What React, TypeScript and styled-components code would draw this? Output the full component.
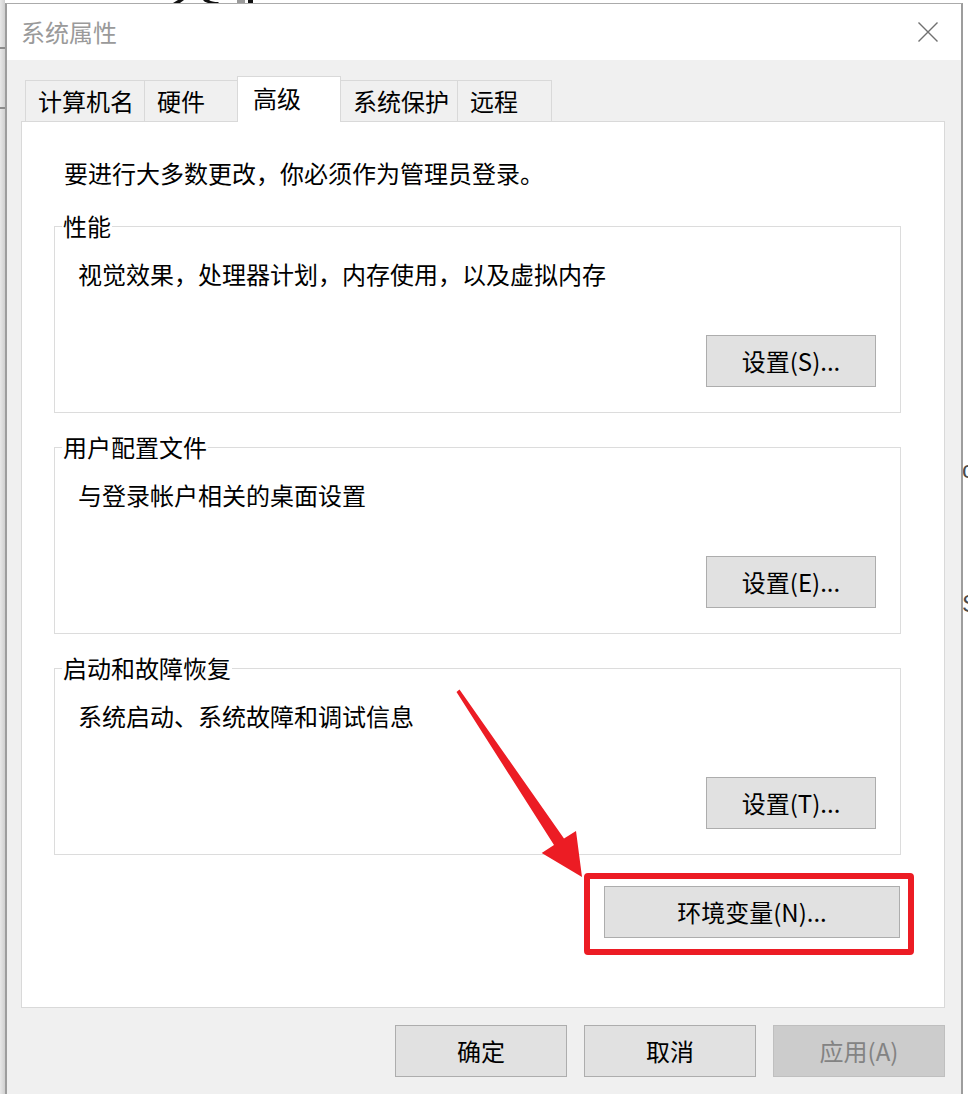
import React from "react";
import styled, { createGlobalStyle } from "styled-components";

const FONT = `"Noto Sans CJK SC", "Noto Sans CJK JP", "Noto Sans", sans-serif`;

const GlobalStyle = createGlobalStyle`
  html, body { margin: 0; padding: 0; background: #ffffff; }
  body { font-family: ${FONT}; }
  * { box-sizing: border-box; }
`;

const Page = styled.div`
  display: flex;
  width: 968px;
  height: 1094px;
  overflow: hidden;
  background: #ffffff;
  font-family: ${FONT};
  color: #000;
`;

const LeftEdge = styled.div`
  width: 5px;
  flex: none;
  display: flex;
  flex-direction: column;
  background: linear-gradient(to right, #e8e8e8, #d0d0d0);
`;

const EdgeMark = styled.div<{ $top: number }>`
  margin-top: ${(p) => p.$top}px;
  height: 2px;
  background: #8c8c8c;
`;

const RightEdge = styled.div`
  width: 5px;
  flex: none;
  display: flex;
  flex-direction: column;
  overflow: hidden;
  background: #ffffff;
`;

const EdgeGlyph = styled.div<{ $top: number }>`
  margin-top: ${(p) => p.$top}px;
  margin-left: -1px;
  font-family: "Liberation Sans", sans-serif;
  font-size: 24px;
  line-height: 24px;
  color: #4a4a4a;
  white-space: nowrap;
`;

const Center = styled.div`
  width: 958px;
  flex: none;
  display: flex;
  flex-direction: column;
`;

const TopStrip = styled.div`
  height: 3px;
  flex: none;
  overflow: hidden;
  display: flex;
`;

const Window = styled.div`
  flex: 1;
  display: flex;
  flex-direction: column;
  border-top: 1px solid #ababab;
  border-left: 2px solid #9d9d9d;
  border-right: 2px solid #9d9d9d;
`;

const TitleBar = styled.div`
  height: 56px;
  flex: none;
  background: #ffffff;
  display: flex;
  align-items: center;
  justify-content: space-between;
  padding: 0 23px 0 14px;
`;

const Title = styled.div`
  font-size: 24px;
  line-height: 32px;
  color: #9a9a9a;
`;

const CloseButton = styled.div`
  width: 20px;
  height: 20px;
  display: flex;
`;

const Body = styled.div`
  flex: 1;
  background: #f0f0f0;
  padding: 16px 16px 0 14px;
  display: flex;
  flex-direction: column;
`;

const TabRow = styled.div`
  height: 45px;
  display: flex;
  align-items: flex-end;
  padding-left: 4px;
`;

const Tab = styled.div<{ $w: number; $active?: boolean }>`
  width: ${(p) => p.$w}px;
  height: ${(p) => (p.$active ? 46 : 41)}px;
  margin-right: -1px;
  margin-bottom: ${(p) => (p.$active ? -1 : 0)}px;
  border: 1px solid #d9d9d9;
  border-bottom: none;
  background: ${(p) => (p.$active ? "#ffffff" : "#f0f0f0")};
  font-size: 24px;
  line-height: ${(p) => (p.$active ? 42 : 40)}px;
  padding-left: ${(p) => (p.$active ? 15 : 12)}px;
  white-space: nowrap;
  position: relative;
  z-index: ${(p) => (p.$active ? 1 : 0)};
`;

const Panel = styled.div`
  height: 887px;
  background: #ffffff;
  border: 1px solid #d9d9d9;
  padding: 35px 43px 0 32px;
  display: flex;
  flex-direction: column;
`;

const Intro = styled.div`
  font-size: 24px;
  line-height: 32px;
  margin-left: 10px;
`;

const Group = styled.fieldset<{ $gap: number }>`
  margin: ${(p) => p.$gap}px 0 0 0;
  padding: 0;
  border: 1px solid #dcdcdc;
  min-width: 0;
`;

const Legend = styled.legend`
  margin-left: 7px;
  padding: 0 1px;
  font-size: 24px;
  line-height: 32px;
`;

const GroupInner = styled.div`
  padding: 16px 24px 25px 23px;
  display: flex;
  flex-direction: column;
`;

const GroupDesc = styled.div`
  font-size: 24px;
  line-height: 32px;
`;

const ButtonRow = styled.div<{ $top: number; $right?: number }>`
  display: flex;
  justify-content: flex-end;
  margin-top: ${(p) => p.$top}px;
  margin-right: ${(p) => p.$right ?? 0}px;
`;

const Button = styled.button<{ $w: number }>`
  width: ${(p) => p.$w}px;
  height: 52px;
  flex: none;
  padding: 0;
  margin: 0;
  background: #e1e1e1;
  border: 1px solid #adadad;
  border-radius: 0;
  font-family: ${FONT};
  font-size: 24px;
  line-height: 32px;
  color: #000000;
  &:disabled {
    background: #cccccc;
    border-color: #bfbfbf;
    color: #838383;
  }
`;

const EnvAnchor = styled.div`
  position: relative;
  display: flex;
`;

const Highlight = styled.div`
  position: absolute;
  left: -20px;
  top: -13px;
  width: 330px;
  height: 82px;
  border: 6px solid #ec1c24;
  border-radius: 4px;
  pointer-events: none;
`;

const ArrowSvg = styled.svg`
  position: absolute;
  left: -150px;
  top: -198px;
  width: 140px;
  height: 200px;
  pointer-events: none;
  overflow: visible;
`;

const BottomRow = styled.div`
  display: flex;
  justify-content: flex-end;
  gap: 17px;
  margin-top: 17px;
`;

const tabs = [
  { label: "计算机名", w: 120 },
  { label: "硬件", w: 94 },
  { label: "高级", w: 104, active: true },
  { label: "系统保护", w: 118 },
  { label: "远程", w: 95 },
];

const groups = [
  { title: "性能", desc: "视觉效果，处理器计划，内存使用，以及虚拟内存", btn: "设置(S)...", gap: 21 },
  { title: "用户配置文件", desc: "与登录帐户相关的桌面设置", btn: "设置(E)...", gap: 18 },
  { title: "启动和故障恢复", desc: "系统启动、系统故障和调试信息", btn: "设置(T)...", gap: 18 },
];

export default function App() {
  return (
    <>
      <GlobalStyle />
      <Page>
        <LeftEdge>
          <EdgeMark $top={47} />
          <EdgeMark $top={58} />
        </LeftEdge>
        <Center>
          <TopStrip>
            <svg width="958" height="3" viewBox="0 0 958 3">
              <polygon points="173,0 179,0 175,3 168,3" fill="#111" />
              <path d="M198 0 L204 0 Q207 2 213 2 L214 3 L203 3 Q199 2 198 0 Z" fill="#111" />
              <rect x="232" y="0" width="8" height="3" fill="#9a9a9a" />
              <rect x="243" y="0" width="5" height="3" fill="#111" />
            </svg>
          </TopStrip>
          <Window>
            <TitleBar>
              <Title>系统属性</Title>
              <CloseButton>
                <svg width="20" height="20" viewBox="0 0 20 20">
                  <path d="M0.5 0.5 L19.5 19.5 M19.5 0.5 L0.5 19.5" stroke="#707070" strokeWidth="1.4" fill="none" />
                </svg>
              </CloseButton>
            </TitleBar>
            <Body>
              <TabRow>
                {tabs.map((t) => (
                  <Tab key={t.label} $w={t.w} $active={t.active}>
                    {t.label}
                  </Tab>
                ))}
              </TabRow>
              <Panel>
                <Intro>要进行大多数更改，你必须作为管理员登录。</Intro>
                {groups.map((g) => (
                  <Group key={g.title} $gap={g.gap}>
                    <Legend>{g.title}</Legend>
                    <GroupInner>
                      <GroupDesc>{g.desc}</GroupDesc>
                      <ButtonRow $top={45}>
                        <Button $w={170}>{g.btn}</Button>
                      </ButtonRow>
                    </GroupInner>
                  </Group>
                ))}
                <ButtonRow $top={31} $right={1}>
                  <EnvAnchor>
                    <Button $w={296}>环境变量(N)...</Button>
                    <Highlight />
                    <ArrowSvg viewBox="454 688 140 200">
                      <polygon
                        points="456.5,692 459.5,689.5 564,838.4 576,831 582,877 541.7,853 554,845"
                        fill="#ec1c24"
                      />
                    </ArrowSvg>
                  </EnvAnchor>
                </ButtonRow>
              </Panel>
              <BottomRow>
                <Button $w={172}>确定</Button>
                <Button $w={172}>取消</Button>
                <Button $w={172} disabled>
                  应用(A)
                </Button>
              </BottomRow>
            </Body>
          </Window>
        </Center>
        <RightEdge>
          <EdgeGlyph $top={458}>c</EdgeGlyph>
          <EdgeGlyph $top={110}>S</EdgeGlyph>
        </RightEdge>
      </Page>
    </>
  );
}
